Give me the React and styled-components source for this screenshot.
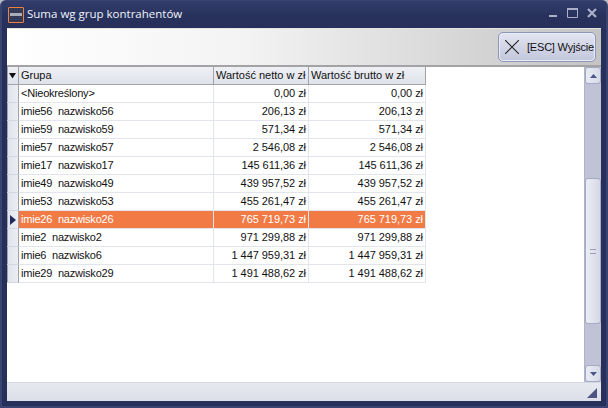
import React from 'react';
import styled, { createGlobalStyle } from 'styled-components';

const GlobalStyle = createGlobalStyle`
  html, body {
    margin: 0;
    padding: 0;
    background: #b9bcc4;
    overflow: hidden;
  }
  * {
    box-sizing: border-box;
  }
`;

const Window = styled.div`
  width: 608px;
  height: 408px;
  display: flex;
  flex-direction: column;
  background: #26305a;
  border: 2px solid #3a4470;
  border-top-width: 1px;
  border-radius: 6px 6px 0 0;
  padding: 0 5px 5px;
  font-family: "Liberation Sans", Arial, sans-serif;
  font-size: 11px;
  color: #111;
  overflow: hidden;
`;

const TitleBar = styled.div`
  height: 27px;
  flex-shrink: 0;
  margin: 0 -5px;
  padding: 0 9px 0 6px;
  display: flex;
  align-items: center;
  background: linear-gradient(#323d6d, #27315b 60%, #26305a);
`;

const AppIcon = styled.div`
  width: 16px;
  height: 16px;
  border: 1px solid #f0803f;
  border-radius: 1px;
  background: #333a58;
  display: flex;
  align-items: center;
  justify-content: center;
  margin-right: 3px;
`;

const AppIconMark = styled.div`
  width: 12px;
  height: 3px;
  background: #a9adbb;
`;

const Title = styled.div`
  flex: 1;
  padding-bottom: 2px;
  color: #eef2fb;
  font-family: "Open Sans", sans-serif;
  font-size: 11.5px;
`;

const WindowButtons = styled.div`
  display: flex;
  align-items: center;
  gap: 9px;
  padding-bottom: 3px;
`;

const Client = styled.div`
  flex: 1;
  min-height: 0;
  display: flex;
  flex-direction: column;
  background: #fff;
`;

const Toolbar = styled.div`
  height: 39px;
  flex-shrink: 0;
  display: flex;
  justify-content: flex-end;
  align-items: flex-start;
  padding: 3px 5px 0 0;
  background: linear-gradient(90deg, #fff 0%, #f3f3f3 40%, #c4c4c4 100%);
  border-top: 1px solid #e4e4e4;
  border-bottom: 2px solid #a3a3a3;
`;

const ExitButton = styled.button`
  width: 98px;
  height: 30px;
  display: flex;
  align-items: center;
  padding: 0 0 0 6px;
  gap: 8px;
  border: 1px solid #8f96bc;
  border-radius: 5px;
  background: linear-gradient(#e3e5f1, #d2d5e6 50%, #c3c7dc);
  box-shadow: inset 0 0 0 1px #e9ebf5;
  font: inherit;
  letter-spacing: -0.2px;
  color: #111;
  white-space: nowrap;
`;

const Main = styled.div`
  flex: 1;
  min-height: 0;
  display: flex;
`;

const Grid = styled.div`
  flex: 1;
  min-width: 0;
  background: #fff;
`;

const Row = styled.div`
  width: 419px;
  height: 18px;
  display: grid;
  grid-template-columns: 12px 195px 95px 117px;
  background: ${(p) => (p.$selected ? '#f27a45' : '#fff')};
`;

const HeaderRow = styled(Row)`
  background: linear-gradient(#eef0f5, #dfe2ea);
  border-bottom: 1px solid #a2a4aa;
`;

const Indicator = styled.div`
  display: flex;
  align-items: center;
  justify-content: center;
  background: linear-gradient(90deg, #dfe2ec, #eceef4);
  border-right: 1px solid #9fa1a8;
  border-bottom: 1px solid #d4d7e0;
  box-shadow: inset 1px 0 0 #9fa1a8;
`;

const HeaderIndicator = styled(Indicator)`
  background: linear-gradient(#eef0f5, #dfe2ea);
  border-bottom: 0;
`;

const HeaderCell = styled.div`
  padding-left: 2px;
  line-height: 17px;
  border-right: 1px solid #a2a4aa;
  white-space: nowrap;
  overflow: hidden;
`;

const Cell = styled.div`
  padding: 0 2px;
  line-height: 17px;
  text-align: ${(p) => (p.$right ? 'right' : 'left')};
  letter-spacing: ${(p) => (p.$right ? '-0.05px' : '-0.2px')};
  color: ${(p) => (p.$selected ? '#fff' : '#111')};
  border-right: 1px solid #e2e5ec;
  border-bottom: 1px solid #e2e5ec;
  white-space: pre;
`;

const ScrollBar = styled.div`
  width: 17px;
  flex-shrink: 0;
  display: flex;
  flex-direction: column;
  background: #bfc3d5;
  border-left: 1px solid #b0b4ca;
`;

const ScrollButton = styled.div`
  height: 17px;
  flex-shrink: 0;
  display: flex;
  align-items: center;
  justify-content: center;
  background: linear-gradient(90deg, #e9ebf3, #d7dae7);
  border: 1px solid #a4a9c4;
  border-radius: 3px;
`;

const ScrollButtonDown = styled(ScrollButton)`
  margin-top: auto;
`;

const ScrollThumb = styled.div`
  height: 146px;
  margin-top: 94px;
  display: flex;
  align-items: center;
  justify-content: center;
  background: linear-gradient(90deg, #eceef5, #d5d8e5);
  border: 1px solid #a4a9c4;
  border-radius: 3px;
`;

const Grip = styled.div`
  width: 6px;
  height: 5px;
  border-top: 1px solid #9a9fb8;
  border-bottom: 1px solid #9a9fb8;
`;

const StatusBar = styled.div`
  height: 19px;
  flex-shrink: 0;
  display: flex;
  justify-content: flex-end;
  align-items: flex-end;
  padding: 0 4px 3px 0;
  background: linear-gradient(#e7e9f0, #dcdfe7);
  border-top: 1px solid #d4d7e2;
`;

const rows = [
  ['<Nieokreślony>', '0,00 zł', '0,00 zł'],
  ['imie56  nazwisko56', '206,13 zł', '206,13 zł'],
  ['imie59  nazwisko59', '571,34 zł', '571,34 zł'],
  ['imie57  nazwisko57', '2 546,08 zł', '2 546,08 zł'],
  ['imie17  nazwisko17', '145 611,36 zł', '145 611,36 zł'],
  ['imie49  nazwisko49', '439 957,52 zł', '439 957,52 zł'],
  ['imie53  nazwisko53', '455 261,47 zł', '455 261,47 zł'],
  ['imie26  nazwisko26', '765 719,73 zł', '765 719,73 zł'],
  ['imie2  nazwisko2', '971 299,88 zł', '971 299,88 zł'],
  ['imie6  nazwisko6', '1 447 959,31 zł', '1 447 959,31 zł'],
  ['imie29  nazwisko29', '1 491 488,62 zł', '1 491 488,62 zł'],
];

function App() {
  return (
    <>
      <GlobalStyle />
      <Window>
        <TitleBar>
          <AppIcon><AppIconMark /></AppIcon>
          <Title>Suma wg grup kontrahentów</Title>
          <WindowButtons>
            <svg width="9" height="10" viewBox="0 0 9 10"><rect x="0" y="7" width="8" height="2" fill="#aab0c8" /></svg>
            <svg width="11" height="10" viewBox="0 0 11 10"><path d="M.5 1.5h10v8H.5z" fill="none" stroke="#aab0c8" /><path d="M0 1h11" stroke="#aab0c8" strokeWidth="2" /></svg>
            <svg width="10" height="10" viewBox="0 0 10 10"><path d="M1 1l8 8M9 1l-8 8" stroke="#aab0c8" strokeWidth="2.2" /></svg>
          </WindowButtons>
        </TitleBar>
        <Client>
          <Toolbar>
            <ExitButton>
              <svg width="14" height="14" viewBox="0 0 14 14"><path d="M0 0l14 14M14 0L0 14" stroke="#222" strokeWidth="1.1" /></svg>
              <span>[ESC] Wyjście</span>
            </ExitButton>
          </Toolbar>
          <Main>
            <Grid>
              <HeaderRow>
                <HeaderIndicator>
                  <svg width="7" height="7" viewBox="0 0 7 7"><path d="M0 1h7L3.5 6.5z" fill="#111" /></svg>
                </HeaderIndicator>
                <HeaderCell>Grupa</HeaderCell>
                <HeaderCell>Wartość netto w zł</HeaderCell>
                <HeaderCell>Wartość brutto w zł</HeaderCell>
              </HeaderRow>
              {rows.map((r, i) => {
                const selected = i === 7;
                return (
                  <Row key={r[0]} $selected={selected}>
                    <Indicator>
                      {selected && (
                        <svg width="6" height="10" viewBox="0 0 6 10"><path d="M0 0l6 5-6 5z" fill="#1f2a5c" /></svg>
                      )}
                    </Indicator>
                    <Cell $selected={selected}>{r[0]}</Cell>
                    <Cell $selected={selected} $right>{r[1]}</Cell>
                    <Cell $selected={selected} $right>{r[2]}</Cell>
                  </Row>
                );
              })}
            </Grid>
            <ScrollBar>
              <ScrollButton>
                <svg width="7" height="4" viewBox="0 0 7 4"><path d="M3.5 0L7 4H0z" fill="#4a5488" /></svg>
              </ScrollButton>
              <ScrollThumb><Grip /></ScrollThumb>
              <ScrollButtonDown>
                <svg width="7" height="4" viewBox="0 0 7 4"><path d="M0 0h7L3.5 4z" fill="#4a5488" /></svg>
              </ScrollButtonDown>
            </ScrollBar>
          </Main>
          <StatusBar>
            <svg width="10" height="10" viewBox="0 0 10 10"><path d="M10 0v10H0z" fill="#4d5680" /></svg>
          </StatusBar>
        </Client>
      </Window>
    </>
  );
}

export default App;
